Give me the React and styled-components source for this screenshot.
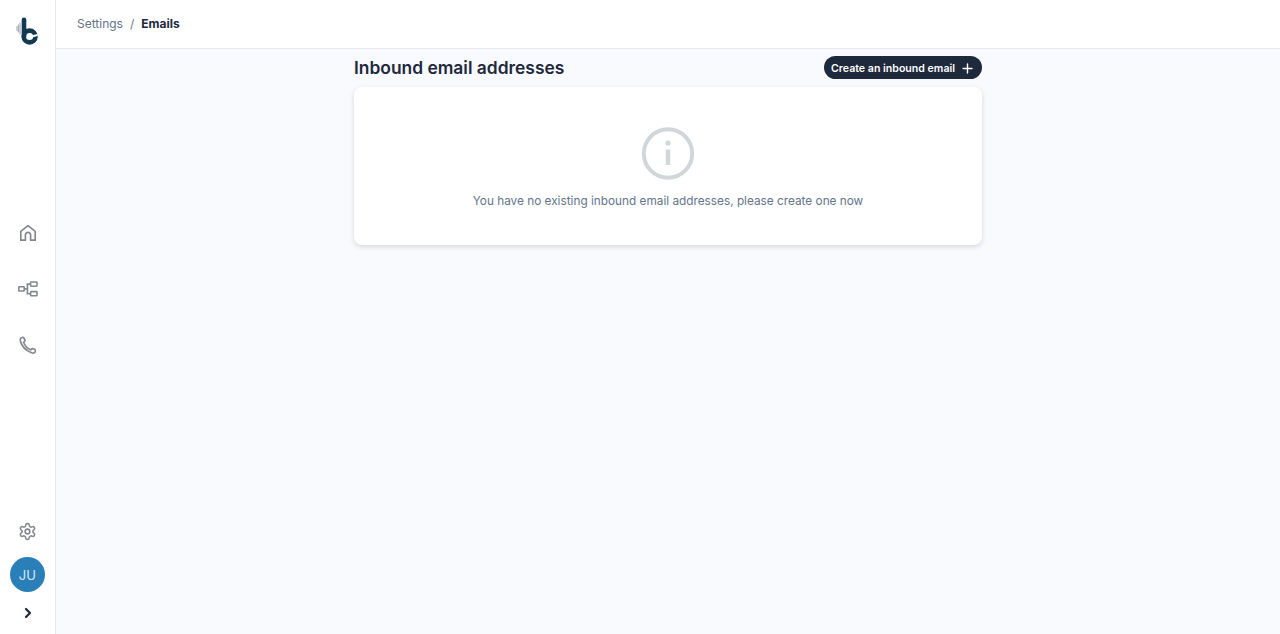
import React from "react";
import styled, { createGlobalStyle } from "styled-components";

const Global = createGlobalStyle`
  html, body { margin: 0; padding: 0; height: 100%; }
  body { font-family: "Inter", "Liberation Sans", sans-serif; background: #f9fafd; overflow: hidden; }
  #root { height: 100%; }
`;

const Shell = styled.div`
  display: grid;
  grid-template-columns: 56px 1fr;
  grid-template-rows: 49px 1fr;
  width: 1280px;
  height: 634px;
`;

const Rail = styled.aside`
  grid-row: 1 / 3;
  display: flex;
  flex-direction: column;
  align-items: center;
  background: #fff;
  border-right: 1px solid #e5e8ef;
  box-sizing: border-box;
`;

const LogoSlot = styled.div`
  height: 49px;
  width: 100%;
  box-sizing: border-box;
  padding-top: 13px;
  display: flex;
  align-items: center;
  justify-content: center;
  margin-bottom: 156px;
`;

const NavItem = styled.div`
  width: 100%;
  height: 56px;
  display: flex;
  align-items: center;
  justify-content: center;
  color: #85888e;
`;

const Spacer = styled.div`
  flex: 1;
`;

const Gear = styled.div`
  display: flex;
  justify-content: center;
  color: #85888e;
  margin-bottom: 16px;
`;

const Avatar = styled.div`
  width: 35px;
  height: 35px;
  border-radius: 50%;
  background: #2a7fb8;
  color: #d8e8f3;
  font-size: 13px;
  letter-spacing: 0.2px;
  display: flex;
  align-items: center;
  justify-content: center;
  margin-bottom: 13px;
`;

const Expand = styled.div`
  height: 16px;
  display: flex;
  align-items: center;
  color: #1e293b;
  margin-bottom: 13px;
`;

const TopBar = styled.header`
  background: #fff;
  border-bottom: 1px solid #e5e8ef;
  display: flex;
  align-items: center;
  gap: 7px;
  padding: 0 21px 2px;
  font-size: 12px;
`;

const Crumb = styled.span`
  color: ${(p) => (p.$current ? "#1e293b" : "#64748b")};
  font-weight: ${(p) => (p.$current ? 700 : 400)};
`;

const Main = styled.main`
  display: flex;
  justify-content: center;
  padding-top: 7px;
`;

const Column = styled.div`
  width: 628px;
  display: flex;
  flex-direction: column;
`;

const Heading = styled.div`
  height: 24px;
  display: flex;
  align-items: center;
  justify-content: space-between;
  margin-bottom: 7px;
`;

const Title = styled.h1`
  margin: 0;
  font-size: 17.4px;
  line-height: 24px;
  font-weight: 600;
  color: #1e293b;
`;

const Button = styled.button`
  height: 23px;
  width: 158px;
  box-sizing: border-box;
  border: 0;
  border-radius: 12px;
  background: #1e293b;
  color: #fff;
  font: 600 10.6px "Inter", sans-serif;
  display: flex;
  align-items: center;
  justify-content: space-between;
  padding: 1px 9px 0 7px;
  margin-top: -1px;
`;

const Card = styled.section`
  height: 158px;
  background: #fff;
  border-radius: 8px;
  box-shadow: 0 2px 5px rgba(30, 41, 59, 0.16);
  display: flex;
  flex-direction: column;
  align-items: center;
  padding-top: 40px;
  box-sizing: border-box;
`;

const Message = styled.p`
  margin: 11px 0 0;
  font-size: 11.8px;
  line-height: 18px;
  color: #64748b;
`;

const Logo = () => (
  <svg width="26" height="30" viewBox="0 0 26 30" fill="none">
    <path d="M9 3.8V20.5" stroke="#123a53" strokeWidth="4.6" strokeLinecap="round" />
    <circle cx="14.6" cy="20.5" r="5.9" stroke="#123a53" strokeWidth="4.6" />
    <path d="M14.6 21l8-2" stroke="#fff" strokeWidth="2" />
    <path d="M5 7v11M3.4 9v7M2 10.5v4" stroke="#9aa5b0" strokeWidth="1" strokeLinecap="round" />
  </svg>
);

const Home = () => (
  <svg width="18" height="18" viewBox="0 0 18 18" fill="none" stroke="currentColor" strokeWidth="1.7" strokeLinejoin="round">
    <path d="M1.8 7.4 9 1.6l7.2 5.8v8.8h-4.6v-5.2a2.6 2.6 0 0 0-5.2 0v5.2H1.8z" />
  </svg>
);

const Flow = () => (
  <svg width="20" height="18" viewBox="0 0 20 18" fill="none" stroke="currentColor" strokeWidth="1.6">
    <rect x="0.8" y="6.8" width="5.4" height="4.2" rx="0.6" />
    <rect x="12.6" y="2" width="6.4" height="4.2" rx="0.6" />
    <rect x="12.6" y="11.6" width="6.4" height="4.2" rx="0.6" />
    <path d="M6.2 8.9h3.2M12.6 4.1H9.4v9.6h3.2" />
  </svg>
);

const Phone = () => (
  <svg width="18" height="18" viewBox="0 0 18 18" fill="none" stroke="currentColor" strokeWidth="1.7" strokeLinecap="round" strokeLinejoin="round">
    <path d="M1.6 2.4c.4-.8 2.6-1.4 3.2-.6l1.2 2.4c.2.6-.8 1.6-1.4 2 1 2.8 4 6.4 7.2 7.6.6-.6 1.4-1.4 2.2-1.2l2 1c.6.6.2 2.4-.4 3-.8.6-2 .6-3 .2C7 14.6 2.6 10 1.4 5c-.2-1-.2-1.8.2-2.6z" />
  </svg>
);

const Cog = () => (
  <svg width="19" height="19" viewBox="0 0 24 24" fill="none" stroke="currentColor" strokeWidth="2" strokeLinecap="round" strokeLinejoin="round">
    <path d="M12.22 2h-.44a2 2 0 0 0-2 2v.18a2 2 0 0 1-1 1.73l-.43.25a2 2 0 0 1-2 0l-.15-.08a2 2 0 0 0-2.73.73l-.22.38a2 2 0 0 0 .73 2.73l.15.1a2 2 0 0 1 1 1.72v.51a2 2 0 0 1-1 1.74l-.15.09a2 2 0 0 0-.73 2.73l.22.38a2 2 0 0 0 2.73.73l.15-.08a2 2 0 0 1 2 0l.43.25a2 2 0 0 1 1 1.73V20a2 2 0 0 0 2 2h.44a2 2 0 0 0 2-2v-.18a2 2 0 0 1 1-1.73l.43-.25a2 2 0 0 1 2 0l.15.08a2 2 0 0 0 2.73-.73l.22-.39a2 2 0 0 0-.73-2.73l-.15-.08a2 2 0 0 1-1-1.74v-.5a2 2 0 0 1 1-1.74l.15-.09a2 2 0 0 0 .73-2.73l-.22-.38a2 2 0 0 0-2.73-.73l-.15.08a2 2 0 0 1-2 0l-.43-.25a2 2 0 0 1-1-1.73V4a2 2 0 0 0-2-2z" />
    <circle cx="12" cy="12" r="3" />
  </svg>
);

const Chevron = () => (
  <svg width="10" height="12" viewBox="0 0 10 12" fill="none" stroke="currentColor" strokeWidth="2.2" strokeLinecap="round" strokeLinejoin="round">
    <path d="M3 2l4 4-4 4" />
  </svg>
);

const Plus = () => (
  <svg width="11" height="11" viewBox="0 0 11 11" stroke="currentColor" strokeWidth="1.4" strokeLinecap="round">
    <path d="M5.5 1v9M1 5.5h9" />
  </svg>
);

const Info = () => (
  <svg width="54" height="54" viewBox="0 0 54 54" fill="none" stroke="#d3d6d8">
    <circle cx="27" cy="26.5" r="24.2" strokeWidth="4" />
    <circle cx="27" cy="16" r="2.6" fill="#d3d6d8" stroke="none" />
    <rect x="24.8" y="22.5" width="4.4" height="15.5" fill="#d3d6d8" stroke="none" />
  </svg>
);

export default function App() {
  return (
    <>
      <Global />
      <Shell>
        <Rail>
          <LogoSlot><Logo /></LogoSlot>
          <NavItem><Home /></NavItem>
          <NavItem><Flow /></NavItem>
          <NavItem><Phone /></NavItem>
          <Spacer />
          <Gear><Cog /></Gear>
          <Avatar>JU</Avatar>
          <Expand><Chevron /></Expand>
        </Rail>
        <TopBar>
          <Crumb>Settings</Crumb>
          <Crumb>/</Crumb>
          <Crumb $current>Emails</Crumb>
        </TopBar>
        <Main>
          <Column>
            <Heading>
              <Title>Inbound email addresses</Title>
              <Button>Create an inbound email <Plus /></Button>
            </Heading>
            <Card>
              <Info />
              <Message>You have no existing inbound email addresses, please create one now</Message>
            </Card>
          </Column>
        </Main>
      </Shell>
    </>
  );
}
